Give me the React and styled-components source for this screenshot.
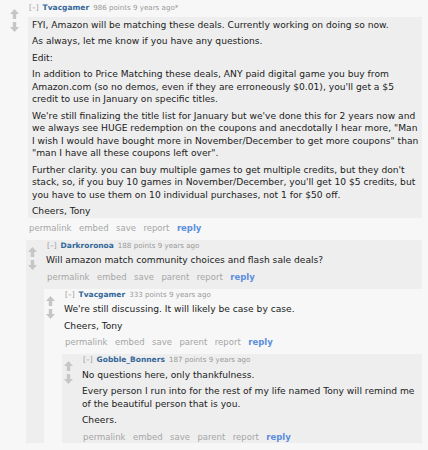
import React from 'react';
import styled, { createGlobalStyle } from 'styled-components';

const GlobalStyle = createGlobalStyle`
  html, body {
    margin: 0;
    padding: 0;
    background: #f7f7f7;
  }
  body {
    font-family: 'DejaVu Sans', Verdana, sans-serif;
    color: #222;
  }
`;

const Page = styled.div`
  padding: 2px 6px 0 8px;
  width: 428px;
  height: 450px;
  box-sizing: border-box;
  overflow: hidden;
  background: #f7f7f7;
`;

const CommentBox = styled.div`
  background: ${(p) => (p.$shade ? '#eeeeee' : '#f7f7f7')};
  padding-top: 1px;
`;

const Row = styled.div`
  display: flex;
  align-items: flex-start;
`;

const Midcol = styled.div`
  width: 20px;
  flex: 0 0 20px;
  box-sizing: border-box;
  padding: 6px 0 0 2px;
  display: flex;
  flex-direction: column;
  gap: 3px;
`;

const Entry = styled.div`
  flex: 1;
  min-width: 0;
`;

const Tagline = styled.div`
  font-size: 7.5px;
  line-height: 10px;
  color: #999;
  padding-left: 1px;
  white-space: nowrap;
`;

const Toggle = styled.span`
  color: #999;
  margin-right: 4px;
`;

const Author = styled.span`
  color: #369;
  font-weight: bold;
  margin-right: 4px;
`;

const Score = styled.span`
  font-size: 7.1px;
`;

const Body = styled.div`
  margin-top: 3.5px;
  background: ${(p) => (p.$highlight ? '#eeeeee' : 'transparent')};
  padding: ${(p) => (p.$highlight ? '2px 0 0 4px' : '0')};
  font-size: 9.15px;
  line-height: 12.5px;
  color: #222;
`;

const Para = styled.p`
  margin: 0 0 4px;
  &:last-child {
    margin-bottom: 0;
  }
`;

const Buttons = styled.ul`
  list-style: none;
  margin: 4px 0 0;
  padding: 0 0 0 1px;
  display: flex;
  gap: 7.5px;
  font-size: 8.5px;
  line-height: 12px;
`;

const Button = styled.li`
  color: ${(p) => (p.$primary ? '#5b8fdc' : '#a6a6a6')};
  font-weight: ${(p) => (p.$primary ? 'bold' : 'normal')};
`;

const Children = styled.div`
  margin: 6px 0 0 18px;
`;

function Arrow({ down }) {
  return (
    <svg width="9" height="10" viewBox="0 0 9 10" style={down ? { transform: 'scaleY(-1)' } : undefined}>
      <path d="M4.5 0 L9 5 H6.2 V10 H2.8 V5 H0 Z" fill="#c6c6c6" />
    </svg>
  );
}

const nestedButtons = ['permalink', 'embed', 'save', 'parent', 'report', 'reply'];

function Comment({ author, points, time, edited, paras, buttons, shade, highlight, children }) {
  return (
    <CommentBox $shade={shade}>
      <Row>
        <Midcol>
          <Arrow />
          <Arrow down />
        </Midcol>
        <Entry>
          <Tagline>
            <Toggle>[–]</Toggle>
            <Author>{author}</Author>
            <Score>
              {points} points {time}{edited ? '*' : ''}
            </Score>
          </Tagline>
          <Body $highlight={highlight}>
            {paras.map((t, i) => (
              <Para key={i}>{t}</Para>
            ))}
          </Body>
          <Buttons>
            {buttons.map((b) => (
              <Button key={b} $primary={b === 'reply'}>{b}</Button>
            ))}
          </Buttons>
        </Entry>
      </Row>
      {children && <Children>{children}</Children>}
    </CommentBox>
  );
}

export default function App() {
  return (
    <Page>
      <GlobalStyle />
      <Comment
        author="Tvacgamer"
        points={986}
        time="9 years ago"
        edited
        highlight
        paras={[
          'FYI, Amazon will be matching these deals. Currently working on doing so now.',
          'As always, let me know if you have any questions.',
          'Edit:',
          "In addition to Price Matching these deals, ANY paid digital game you buy from Amazon.com (so no demos, even if they are erroneously $0.01), you'll get a $5 credit to use in January on specific titles.",
          "We're still finalizing the title list for January but we've done this for 2 years now and we always see HUGE redemption on the coupons and anecdotally I hear more, \"Man I wish I would have bought more in November/December to get more coupons\" than \"man I have all these coupons left over\".",
          "Further clarity. you can buy multiple games to get multiple credits, but they don't stack, so, if you buy 10 games in November/December, you'll get 10 $5 credits, but you have to use them on 10 individual purchases, not 1 for $50 off.",
          'Cheers, Tony',
        ]}
        buttons={['permalink', 'embed', 'save', 'report', 'reply']}
      >
        <Comment
          shade
          author="Darkroronoa"
          points={188}
          time="9 years ago"
          paras={['Will amazon match community choices and flash sale deals?']}
          buttons={nestedButtons}
        >
          <Comment
            author="Tvacgamer"
            points={333}
            time="9 years ago"
            paras={["We're still discussing. It will likely be case by case.", 'Cheers, Tony']}
            buttons={nestedButtons}
          >
            <Comment
              shade
              author="Gobble_Bonners"
              points={187}
              time="9 years ago"
              paras={[
                'No questions here, only thankfulness.',
                'Every person I run into for the rest of my life named Tony will remind me of the beautiful person that is you.',
                'Cheers.',
              ]}
              buttons={nestedButtons}
            />
          </Comment>
        </Comment>
      </Comment>
    </Page>
  );
}
